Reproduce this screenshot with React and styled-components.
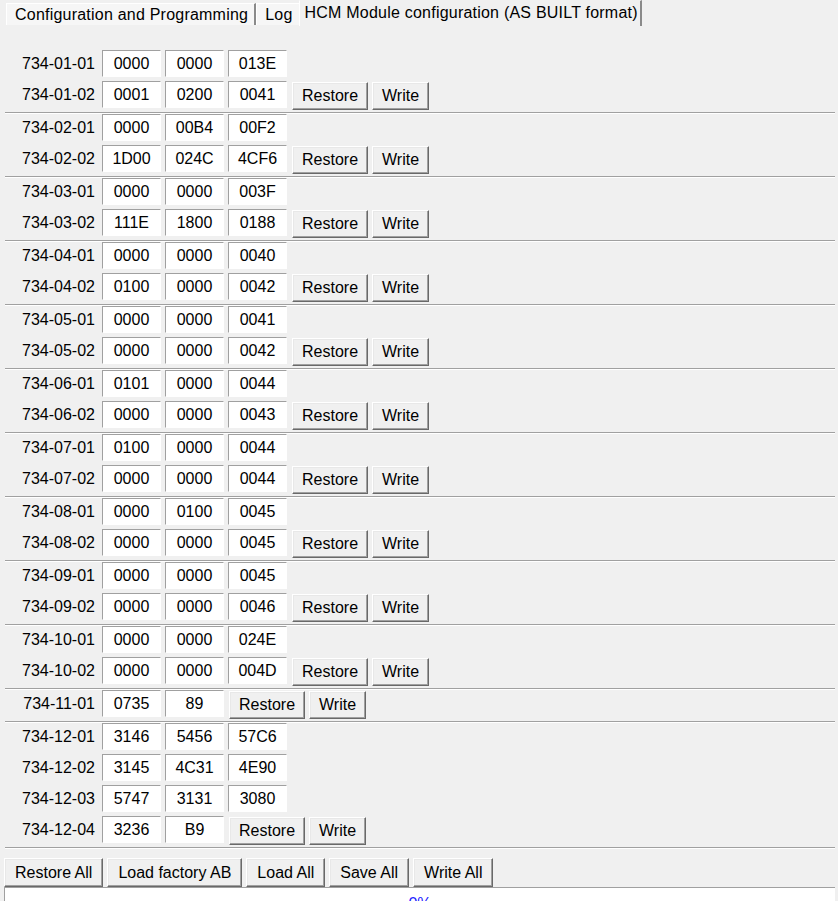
import React from "react";
import styled, { createGlobalStyle } from "styled-components";

const GlobalStyle = createGlobalStyle`
  html, body {
    margin: 0;
    padding: 0;
    background: #f0f0f0;
    overflow: hidden;
  }
  body {
    font-family: "Liberation Sans", Arial, sans-serif;
    font-size: 16px;
    color: #000;
  }
`;

const Window = styled.div`
  width: 838px;
  height: 901px;
  overflow: hidden;
  display: flex;
  flex-direction: column;
  background: #f0f0f0;
`;

const TabBar = styled.div`
  display: flex;
  align-items: flex-start;
  height: 25px;
  padding-left: 6px;
`;

const Tab = styled.div`
  box-sizing: border-box;
  height: ${(p) => (p.$active ? "26px" : "22px")};
  margin-top: ${(p) => (p.$active ? "0" : "3px")};
  margin-left: ${(p) => (p.$active ? "-2px" : "0")};
  padding: ${(p) => (p.$active ? "0 2px 0 5px" : "0 6px 0 8px")};
  line-height: ${(p) => (p.$active ? "24px" : "22px")};
  letter-spacing: 0.22px;
  white-space: nowrap;
  background: ${(p) => (p.$active ? "#f0f0f0" : "#f6f6f6")};
  border-left: 1px solid #fff;
  border-top: 1px solid ${(p) => (p.$active ? "#f0f0f0" : "#fff")};
  border-right: 2px solid #8a8a8a;
  position: relative;
  z-index: ${(p) => (p.$active ? 1 : 0)};
`;

const Content = styled.div`
  padding-top: 25px;
  display: flex;
  flex-direction: column;
`;

const Group = styled.div`
  display: flex;
  flex-direction: column;
  gap: 4px;
`;

const Row = styled.div`
  display: flex;
  align-items: flex-start;
  gap: 4px;
  height: 27px;
`;

const Label = styled.div`
  width: 95px;
  margin-right: 3px;
  text-align: right;
  line-height: 27px;
  white-space: nowrap;
`;

const Cell = styled.div`
  box-sizing: border-box;
  width: 59px;
  height: 27px;
  background: #fff;
  border: 1px solid;
  border-color: #a0a0a0 #fff #fff #a0a0a0;
  text-align: center;
  line-height: 25px;
`;

const Button = styled.button`
  box-sizing: border-box;
  height: ${(p) => (p.$tall ? "29px" : "28px")};
  margin-top: ${(p) => (p.$tall ? "0" : "1px")};
  padding: 0 ${(p) => (p.$tall ? "10px" : "9px")};
  font-family: "Liberation Sans", Arial, sans-serif;
  font-size: 16px;
  color: #000;
  background: #f0f0f0;
  border: 1px solid;
  border-color: #fff #696969 #696969 #fff;
  box-shadow: inset -1px -1px 0 #a0a0a0, inset 1px 1px 0 #e8e8e8;
  border-radius: 0;
  white-space: nowrap;
  cursor: default;

  ${Cell} + & {
    margin-left: 1px;
  }
`;

const Separator = styled.div`
  margin: 4px 3px 0 5px;
  height: 0;
  border-top: 1px solid #a0a0a0;
  border-bottom: 1px solid #fff;
`;

const Toolbar = styled.div`
  display: flex;
  gap: 4px;
  padding-left: 4px;
  margin-top: 9px;
`;

const Progress = styled.div`
  box-sizing: border-box;
  margin: 0 3px 0 4px;
  height: 30px;
  background: #fff;
  border-top: 1px solid #a0a0a0;
  border-left: 1px solid #a0a0a0;
  text-align: center;
  color: #2020ff;
  line-height: 24px;
  padding-top: 4px;
`;

const groups = [
  [["734-01-01", ["0000", "0000", "013E"]], ["734-01-02", ["0001", "0200", "0041"]]],
  [["734-02-01", ["0000", "00B4", "00F2"]], ["734-02-02", ["1D00", "024C", "4CF6"]]],
  [["734-03-01", ["0000", "0000", "003F"]], ["734-03-02", ["111E", "1800", "0188"]]],
  [["734-04-01", ["0000", "0000", "0040"]], ["734-04-02", ["0100", "0000", "0042"]]],
  [["734-05-01", ["0000", "0000", "0041"]], ["734-05-02", ["0000", "0000", "0042"]]],
  [["734-06-01", ["0101", "0000", "0044"]], ["734-06-02", ["0000", "0000", "0043"]]],
  [["734-07-01", ["0100", "0000", "0044"]], ["734-07-02", ["0000", "0000", "0044"]]],
  [["734-08-01", ["0000", "0100", "0045"]], ["734-08-02", ["0000", "0000", "0045"]]],
  [["734-09-01", ["0000", "0000", "0045"]], ["734-09-02", ["0000", "0000", "0046"]]],
  [["734-10-01", ["0000", "0000", "024E"]], ["734-10-02", ["0000", "0000", "004D"]]],
  [["734-11-01", ["0735", "89"]]],
  [
    ["734-12-01", ["3146", "5456", "57C6"]],
    ["734-12-02", ["3145", "4C31", "4E90"]],
    ["734-12-03", ["5747", "3131", "3080"]],
    ["734-12-04", ["3236", "B9"]],
  ],
];

export default function App() {
  return (
    <>
      <GlobalStyle />
      <Window>
        <TabBar>
          <Tab>Configuration and Programming</Tab>
          <Tab>Log</Tab>
          <Tab $active>HCM Module configuration (AS BUILT format)</Tab>
        </TabBar>
        <Content>
          {groups.map((rows, gi) => (
            <React.Fragment key={gi}>
              <Group>
                {rows.map(([label, cells], ri) => (
                  <Row key={label}>
                    <Label>{label}</Label>
                    {cells.map((c, ci) => (
                      <Cell key={ci}>{c}</Cell>
                    ))}
                    {ri === rows.length - 1 && (
                      <>
                        <Button>Restore</Button>
                        <Button>Write</Button>
                      </>
                    )}
                  </Row>
                ))}
              </Group>
              <Separator />
            </React.Fragment>
          ))}
        </Content>
        <Toolbar>
          <Button $tall>Restore All</Button>
          <Button $tall>Load factory AB</Button>
          <Button $tall>Load All</Button>
          <Button $tall>Save All</Button>
          <Button $tall>Write All</Button>
        </Toolbar>
        <Progress>0%</Progress>
      </Window>
    </>
  );
}
